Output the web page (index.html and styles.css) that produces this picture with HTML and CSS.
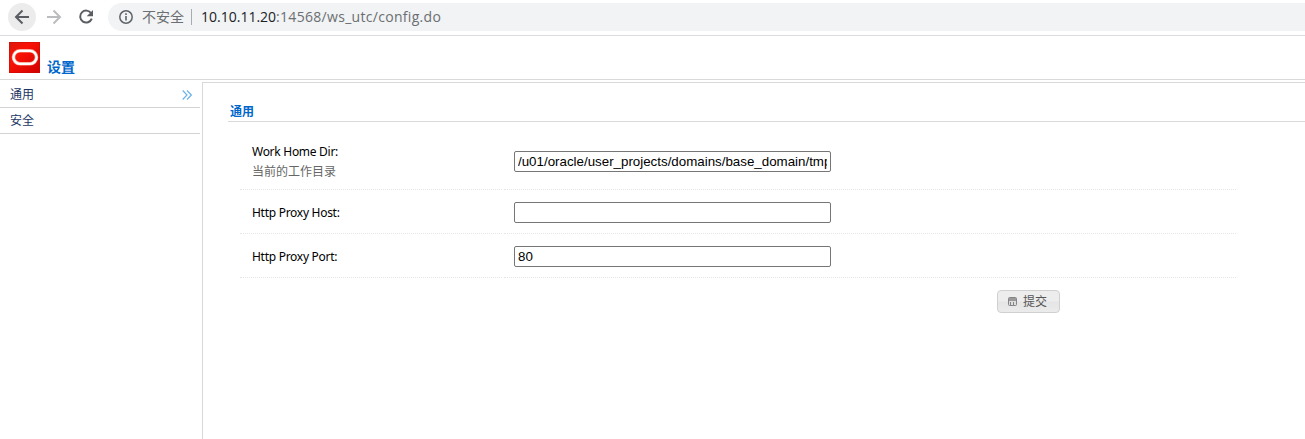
FILE: index.html
```html
<!DOCTYPE html>
<html lang="zh">
<head>
<meta charset="utf-8">
<title>设置</title>
<link rel="stylesheet" href="styles.css">
</head>
<body>
<div class="toolbar">
  <div class="nav-btn back"><svg width="16" height="16" viewBox="0 0 16 16"><path d="M15 8H2.500M8.500 1.500L2 8l6.500 6.500" fill="none" stroke="#5a5e63" stroke-width="2"/></svg></div>
  <div class="nav-btn"><svg width="16" height="16" viewBox="0 0 16 16"><path d="M1 8h12.500M7.500 1.500L14 8l-6.500 6.500" fill="none" stroke="#babcbe" stroke-width="2"/></svg></div>
  <div class="nav-btn"><svg width="16" height="16" viewBox="0 0 16 16"><path d="M13.200 4.300A6 6 0 1 0 13.800 9.700" fill="none" stroke="#5a5e63" stroke-width="2"/><path d="M15 1v6.300H8.700z" fill="#5a5e63"/></svg></div>
  <div class="address">
    <svg width="14" height="14" viewBox="0 0 14 14"><circle cx="7" cy="7" r="6.200" fill="none" stroke="#5f6368" stroke-width="1.500"/><path d="M7 6v4.500M7 3.300v1.700" stroke="#5f6368" stroke-width="1.600"/></svg>
    <span class="insecure">不安全</span>
    <span class="divider"></span>
    <span class="url"><b>10.10.11.20</b>:14568/ws_utc/config.do</span>
  </div>
</div>
<header class="header">
  <svg class="logo" width="31" height="31" viewBox="0 0 31 31">
    <defs><linearGradient id="red" x1="0" y1="0" x2="1" y2="1"><stop offset="0" stop-color="#d91a0c"/><stop offset=".35" stop-color="#fa1206"/><stop offset="1" stop-color="#d00000"/></linearGradient></defs>
    <rect width="31" height="31" fill="url(#red)"/>
    <rect x=".5" y=".5" width="30" height="30" fill="none" stroke="#c30b05" stroke-opacity=".5"/>
    <rect x="4.500" y="8.800" width="23" height="13" rx="6.500" fill="none" stroke="#ff9a8c" stroke-width="3.600"/>
    <rect x="4.500" y="8.800" width="23" height="13" rx="6.500" fill="none" stroke="#fff" stroke-width="2.300"/>
  </svg>
  <h1>设置</h1>
</header>
<div class="main">
  <nav class="sidebar">
    <a class="item">通用<svg width="10" height="10" viewBox="0 0 10 10"><path d="M.7.500L5 5 .700 9.500M5 .500L9.300 5 5 9.500" fill="none" stroke="#6db4e8" stroke-width="1.200"/></svg></a>
    <a class="item">安全</a>
  </nav>
  <section class="content">
    <h2>通用</h2>
    <div class="form">
      <div class="row tall">
        <div class="cell label"><span class="name">Work Home Dir:</span><span class="hint">当前的工作目录</span></div>
        <div class="cell field"><input type="text" value="/u01/oracle/user_projects/domains/base_domain/tmp"></div>
      </div>
      <div class="row">
        <div class="cell label"><span class="name">Http Proxy Host:</span></div>
        <div class="cell field"><input type="text"></div>
      </div>
      <div class="row">
        <div class="cell label"><span class="name">Http Proxy Port:</span></div>
        <div class="cell field"><input type="text" value="80"></div>
      </div>
    </div>
    <button class="submit"><svg width="9" height="9" viewBox="0 0 9 9"><rect x=".5" y=".5" width="8" height="8" rx="1" fill="#ddd" stroke="#858585"/><path d="M1 1h7v3H1z" fill="#9a9a9a"/><path d="M2.500 5v3.500M5.500 5v3.500" stroke="#858585"/></svg><span>提交</span></button>
  </section>
</div>
</body>
</html>
```
FILE: styles.css
```css
* { box-sizing: border-box; }
body {
  margin: 0;
  height: 439px;
  overflow: hidden;
  display: flex;
  flex-direction: column;
  background: #fff;
  font: 12px/18px "Noto Sans", "Noto Sans CJK SC", sans-serif;
  color: #000;
}
svg { display: block; flex: none; }
.toolbar {
  height: 36px;
  flex: none;
  display: flex;
  align-items: flex-start;
  gap: 4px;
  padding: 3px 0 0 8px;
  border-bottom: 1px solid #dadce0;
}
.nav-btn {
  width: 28px;
  height: 28px;
  border-radius: 50%;
  display: flex;
  align-items: center;
  justify-content: center;
}
.back { background: #ececec; }
.address {
  flex: 1;
  height: 28px;
  margin-left: 4px;
  padding-left: 11px;
  border-radius: 14px 0 0 14px;
  background: #f1f3f4;
  display: flex;
  align-items: center;
  color: #6b6e72;
  white-space: nowrap;
}
.insecure { margin: -2px 0 0 9px; width: 43px; font: 14px/20px "Noto Sans CJK SC", sans-serif; }
.divider { width: 1px; height: 16px; margin: 0 9px 0 6px; background: #a9abae; }
.url { font: 14px/20px "Open Sans", sans-serif; letter-spacing: .3px; }
.url b { font-weight: 400; color: #202124; letter-spacing: 0; }
.header {
  height: 44px;
  flex: none;
  display: flex;
  padding: 6px 0 0 9px;
  border-bottom: 1px solid #d9d9d9;
}
.header h1 {
  margin: 14px 0 0 7px;
  font: bold 14px/20px "Noto Sans CJK SC", sans-serif;
  color: #0066cc;
}
.main { flex: 1; display: flex; gap: 2px; }
.sidebar { width: 200px; padding-top: 1px; }
.item {
  height: 27px;
  display: flex;
  align-items: center;
  justify-content: space-between;
  padding: 1px 8px 0 10px;
  border-bottom: 1px solid #d3d3d3;
  color: #1c3564;
}
.item + .item { height: 26px; }
.content {
  flex: 1;
  display: flex;
  flex-direction: column;
  margin-top: 2px;
  padding: 19px 0 0 25px;
  border: solid #d9d9d9;
  border-width: 1px 0 0 1px;
}
.content h2 {
  margin: 0;
  height: 20px;
  padding-left: 2px;
  border-bottom: 1px solid #d9d9d9;
  font: bold 12px/18px "Noto Sans CJK SC", sans-serif;
  color: #0066cc;
}
.form { width: 996px; margin: 14px 0 0 12px; }
.row { display: flex; gap: 2px; height: 44px; }
.tall { height: 54px; }
.cell { border-bottom: 1px dotted #e6e6e6; display: flex; }
.label { width: 262px; padding: 14px 0 0 12px; flex-direction: column; }
.tall .label { padding-top: 7px; }
.field { flex: 1; align-items: flex-start; padding: 12px 0 0 10px; }
.tall .field { padding-top: 15px; }
.name { height: 20px; line-height: 18px; white-space: nowrap; letter-spacing: -.28px; }
.hint { height: 20px; line-height: 18px; color: #666; }
input {
  width: 317px;
  height: 21px;
  padding: 1px 3px;
  border: 1px solid #767676;
  border-radius: 2px;
  background: #fff;
  color: #000;
  font: 13.333px "Liberation Sans", Arial, sans-serif;
}
.submit {
  width: 63px;
  height: 23px;
  margin: 12px 0 0 769px;
  padding: 0 0 0 10px;
  display: flex;
  align-items: center;
  gap: 6px;
  border: 1px solid #d0d0d0;
  border-radius: 4px;
  background: linear-gradient(#ededed 0 48%, #e5e5e5 52%, #ebebeb);
  color: #555;
  font: 12px/18px "Noto Sans CJK SC", sans-serif;
}
.submit span { margin-top: -2px; }
```
